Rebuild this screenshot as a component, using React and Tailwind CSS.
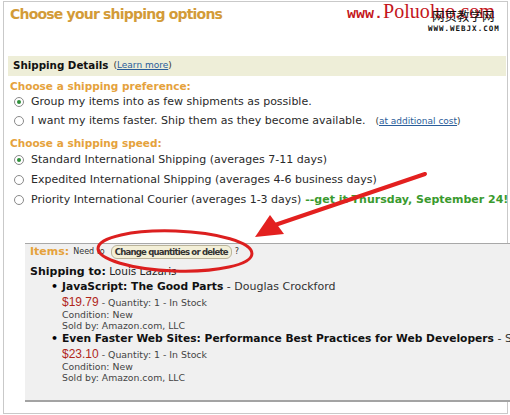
import React from "react";

const radioOn = (
  <span className="mr-[7px] inline-flex h-[10px] w-[10px] shrink-0 items-center justify-center rounded-full border border-[#8a8a8a] bg-white">
    <span className="h-[4px] w-[4px] rounded-full bg-[#2f8f3a]" />
  </span>
);
const radioOff = <span className="mr-[7px] inline-block h-[10px] w-[10px] shrink-0 rounded-full border border-[#8a8a8a] bg-white" />;

function Row({ on, children, className = "" }) {
  return (
    <div className={"flex items-center whitespace-nowrap pl-[10px] text-[11px] text-[#2a2a2a] " + className}>
      {on ? radioOn : radioOff}
      <span>{children}</span>
    </div>
  );
}

function Item({ title, author, price }) {
  return (
    <div className="mb-[1px] whitespace-nowrap">
      <div className="flex items-center leading-[14px]">
        <span className="w-[32px] shrink-0 pl-[21px] text-[11px] font-bold">•</span>
        <span className="text-[10.7px] font-bold text-[#111]">{title}</span>
        <span className="text-[11px] text-[#333]">&nbsp;- {author}</span>
      </div>
      <div className="pl-[32px] leading-[13px]">
        <span className="font-['Liberation_Sans',sans-serif] text-[12px] text-[#b0271b]">{price}</span>
        <span className="text-[9.4px] text-[#444]"> - Quantity: 1 - In Stock</span>
      </div>
      <div className="pl-[32px] text-[9.3px] leading-[11px] text-[#444]">Condition: New</div>
      <div className="pl-[32px] text-[9.3px] leading-[11px] text-[#444]">Sold by: Amazon.com, LLC</div>
    </div>
  );
}

export default function App() {
  return (
    <div className="relative h-[415px] w-[510px] overflow-hidden bg-white font-['DejaVu_Sans',sans-serif]">
      <div className="ml-[3px] mt-[1px] h-[413px] w-[505px] border border-[#c9c9c9]">
        {/* title */}
        <h1 className="pl-[6px] text-[14px] font-bold leading-[24px] tracking-[-0.8px] text-[#d39b38]">
          Choose your shipping options
        </h1>

        <div className="ml-[4px] mr-[1px] mt-[30px] flex h-[20px] items-center bg-[#eeeed8] pl-[5px] whitespace-nowrap">
          <span className="text-[10.3px] font-bold text-[#111]">Shipping Details</span>
          <span className="ml-[5px] text-[9px] text-[#333]">
            (<span className="text-[#2a5d9a] underline">Learn more</span>)
          </span>
        </div>

        <div className="mt-[3px] pl-[6px] text-[10.5px] font-bold leading-[14px] text-[#e5a23c]">Choose a shipping preference:</div>
        <Row on className="h-[18px]">Group my items into as few shipments as possible.</Row>
        <Row className="mt-[1px] h-[18px]">
          I want my items faster. Ship them as they become available.
          <span className="ml-[10px] text-[9px] text-[#333]">
            (<span className="text-[#2a5d9a] underline">at additional cost</span>)
          </span>
        </Row>

        <div className="mt-[6px] pl-[6px] text-[10.5px] font-bold leading-[14px] text-[#e5a23c]">Choose a shipping speed:</div>
        <Row on className="h-[20px]">Standard International Shipping (averages 7-11 days)</Row>
        <Row className="h-[20px]">Expedited International Shipping (averages 4-6 business days)</Row>
        <Row className="h-[20px]">
          Priority International Courier (averages 1-3 days)
          <span className="font-bold text-[#3a9a2e]"> --get it Thursday, September 24!</span>
        </Row>

        {/* items box */}
        <div className="ml-[21px] mt-[33px] w-[490px] border-b-2 border-t border-b-[#a3a3a3] border-t-[#a8a8a8] bg-[#f0f0f0] pb-[16px] pl-[5px]">
          <div className="flex h-[16px] items-center whitespace-nowrap">
            <span className="text-[11px] font-bold text-[#e5a23c]">Items:</span>
            <span className="ml-[4px] text-[8px] text-[#333]">Need to</span>
            <span className="ml-[6px] rounded-[6px] border border-[#b9b39a] bg-[#f3efd7] px-[3px] font-['Liberation_Sans_Narrow','DejaVu_Sans_Condensed',sans-serif] text-[9.5px] font-bold leading-[12px] tracking-[-0.8px] text-[#333]">
              Change quantities or delete
            </span>
            <span className="ml-[3px] text-[8px] text-[#333]">?</span>
          </div>
          <div className="h-[20px] whitespace-nowrap leading-[20px]">
            <span className="text-[11px] font-bold text-[#111]">Shipping to:</span>
            <span className="text-[10.5px] text-[#222]"> Louis Lazaris</span>
          </div>
          <Item title="JavaScript: The Good Parts" author="Douglas Crockford" price="$19.79" />
          <Item
            title="Even Faster Web Sites: Performance Best Practices for Web Developers"
            author="Steve Souders"
            price="$23.10"
          />
        </div>
      </div>

      {/* watermark */}
      <div className="absolute left-[347px] top-[1px] whitespace-nowrap leading-[20px] text-[#c4161c]">
        <span className="font-['Liberation_Mono',monospace] text-[15px] font-bold">www.</span>
        <span className="font-['Liberation_Serif',serif] text-[20px]">Poluoluo.com</span>
      </div>
      <div className="absolute left-[432px] top-[8px] font-['Noto_Sans_CJK_SC',sans-serif] text-[12.5px] leading-[15px] text-[#111]">网页教学网</div>
      <div className="absolute left-[428px] top-[25px] font-['DejaVu_Sans_Mono',monospace] text-[7.5px] font-bold leading-[8px] tracking-[1px] text-[#111]">
        WWW.WEBJX.COM
      </div>

      {/* red annotations */}
      <svg className="absolute left-0 top-0" width="510" height="415" viewBox="0 0 510 415">
        <ellipse cx="175" cy="251" rx="77" ry="20" transform="rotate(2 175 251)" fill="none" stroke="#dc1f1f" strokeWidth="3" />
        <line x1="425" y1="174" x2="272" y2="226" stroke="#e3201f" strokeWidth="4" strokeLinecap="round" />
        <polygon points="255,237 270,215 284,234" fill="#e3201f" />
      </svg>
    </div>
  );
}
